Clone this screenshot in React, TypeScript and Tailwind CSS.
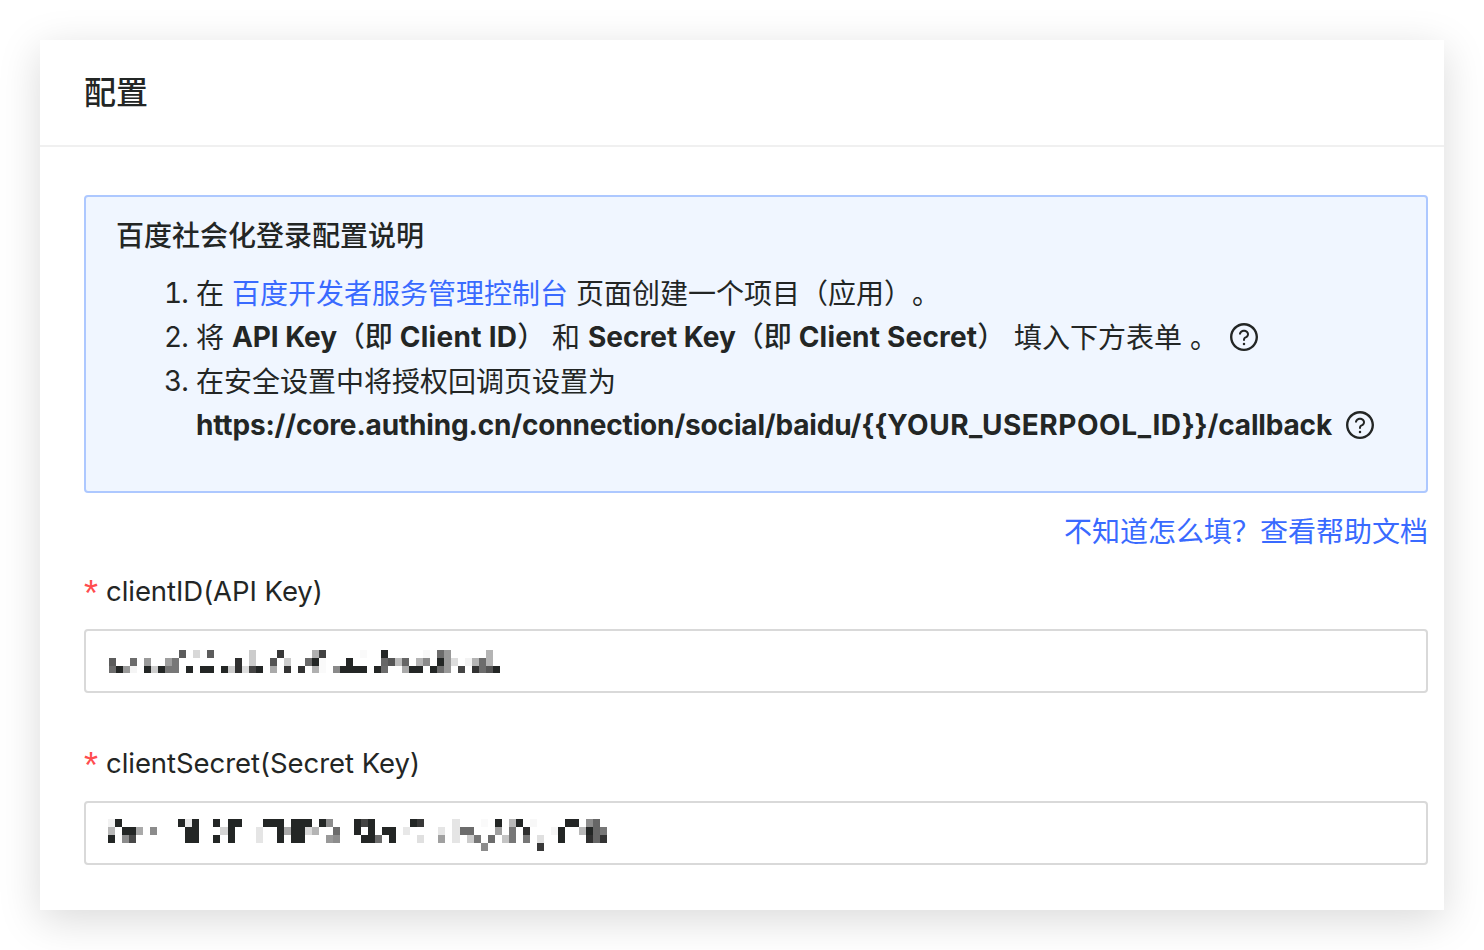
import React from "react";

type MosaicProps = { rows: string[]; cols: number; pitch: number; rowHeight: number };

/* Each row lists "column:shade" or "from-to:shade" runs; a shade is a two-digit grey. */
function Mosaic({ rows, cols, pitch, rowHeight }: MosaicProps) {
  const cells: React.ReactElement[] = [];
  rows.forEach((row, r) => {
    row.split(" ").forEach((run) => {
      if (!run) return;
      const [range, shade] = run.split(":");
      const [from, to = from] = range.split("-");
      const x = Number(from) * pitch;
      const end = (Number(to) + 1) * pitch;
      const fill = shade === "22" ? "#232625" : `#${shade}${shade}${shade}`;
      cells.push(
        <rect key={`${r}-${from}`} x={x} y={r * rowHeight} width={end - x} height={rowHeight} fill={fill} />,
      );
    });
  });
  return (
    <svg width={cols * pitch} height={rows.length * rowHeight} shapeRendering="crispEdges" className="block">
      {cells}
    </svg>
  );
}

const ID_ROWS = [
  "10:5c 12:d8 14:5c 20:cc 24:38 29:b0 30:42 36:fa 39:22 45:f8 47:6c 48:99 54:b4",
  "0:5c 3:6c 5:9a 8:9e 9:77 18:2f 20:cc 23:55 25:cc 28:6a 29:22 30:fa 34:22 39:66 40:55 41:bb 42:66 44:b4 45:8a 47:22 48:99 49:dd 51:f3 52:b4 53:6c 54:b4",
  "0:6c 1:22 2:99 3:f5 5:22 6:cc 7:22 8:77 9:77 11:22 13-14:22 16:22 17:cc 18:2f 19:dd 20:44 21:22 23:aa 25:33 27:33 29:b0 30:fa 32:8a 33-36:22 38:22 39:6c 42:aa 43-44:22 46:22 47:6c 48:99 50:44 52:33 53:6c 54:55 55:22",
];

const SECRET_ROWS = [
  "0:f2 1:22 10:22 11:e8 12:22 15:22 17-18:22 22-24:22 26-28:22 30:22 31:8c 35:22 36:44 37:22 43:22 44:38 49:e5 53:fa 55:22 57:b8 58:22 60:f8 65-66:22 68:8c 69:66",
  "0:b8 2-3:22 4:aa 6:8c 11-12:22 16:d4 17:22 21:e5 24:22 25:aa 26-27:22 28:d8 29:b4 32:6c 35:22 37:22 39-40:22 42:e8 47:e5 49:e5 50-51:6c 55:a0 57:77 59:2f 63:f5 64:22 67:b8 68:22 69:66 70:77",
  "0:22 2:8c 3:48 11-12:22 15:22 17:22 21:e5 24:22 26-27:22 31:99 32:8c 36-37:22 38:6c 40:22 44:e0 47:a0 49:e5 51:cc 52:77 54:6c 56:c4 57:77 59:77 61:e0 64:22 68:2f 69:66 70:33",
  "53:8c 61:38",
];

function HelpIcon() {
  return (
    <svg viewBox="64 64 896 896" className="h-7 w-7 shrink-0" fill="#232625">
      <path d="M512 64C264.6 64 64 264.6 64 512s200.6 448 448 448 448-200.6 448-448S759.4 64 512 64zm0 820c-205.4 0-372-166.6-372-372s166.6-372 372-372 372 166.6 372 372-166.6 372-372 372z" />
      <path d="M623.6 316.7C593.6 290.4 554 276 512 276s-81.6 14.5-111.6 40.7C369.2 344 352 380.7 352 420v7.6c0 4.4 3.6 8 8 8h48c4.4 0 8-3.6 8-8V420c0-44.1 43.1-80 96-80s96 35.9 96 80c0 31.1-22 59.6-56.1 72.7-21.2 8.1-39.2 22.3-52.1 40.9-13.1 19-19.9 41.8-19.9 64.9V620c0 4.4 3.6 8 8 8h48c4.4 0 8-3.6 8-8v-22.7a48.3 48.3 0 0 1 30.9-44.8c59-22.7 97.1-74.7 97.1-132.5.1-39.3-17.1-76-48.3-103.3zM472 732a40 40 0 1 0 80 0 40 40 0 1 0-80 0z" />
    </svg>
  );
}

function Num({ children }: { children: string }) {
  return <span className="-mt-px w-8 tracking-[-0.8px] tabular-nums">{children}</span>;
}

function Label({ children }: { children: string }) {
  return (
    <div className="flex h-11 items-center">
      <span className="w-[22px] pt-1.5 font-['Liberation_Sans',sans-serif] text-[36px] text-[#ff4d4f]">*</span>
      <span className="text-[27.5px] tracking-[-0.05px]">{children}</span>
    </div>
  );
}

export default function App() {
  return (
    <div className="h-[950px] w-[1484px] overflow-hidden bg-white p-10 font-['Inter','Noto_Sans_CJK_SC',sans-serif] text-[28px] leading-[44px] text-[#232625] [text-spacing-trim:space-all]">
      <main className="h-[870px] bg-white shadow-[0_10px_40px_rgba(0,0,0,0.15)]">
        <header className="flex h-[107px] items-center border-b-2 border-[#f0f0f0] pl-11">
          <h1 className="text-[32px] font-medium">配置</h1>
        </header>
        <div className="pt-12 pr-4 pl-11">
          <section className="h-[298px] rounded border-2 border-[#adc8ff] bg-[#f0f6ff] px-[30px] pt-[17px] whitespace-nowrap">
            <h2 className="font-medium">百度社会化登录配置说明</h2>
            <ol className="mt-[14px] pl-12">
              <li className="flex">
                <Num>1.</Num>
                <span className="w-9">在</span>
                <a className="w-[344px] text-[#396aff]">百度开发者服务管理控制台</a>
                <span>页面创建一个项目（应用）。</span>
              </li>
              <li className="flex">
                <Num>2.</Num>
                <span className="w-9">将</span>
                <strong className="-mt-px w-[320px] font-bold tracking-[-0.1px]">
                  API Key<span className="font-medium">（即</span>
                  <span className="tracking-[0.3px]"> Client ID</span>
                  <span className="font-medium">）</span>
                </strong>
                <span className="w-9">和</span>
                <strong className="-mt-px w-[426px] font-bold">
                  Secret Key<span className="font-medium">（即</span>
                  <span className="tracking-[0.2px]"> Client Secret</span>
                  <span className="font-medium">）</span>
                </strong>
                <span className="w-[216px]">填入下方表单 。</span>
                <span className="pt-[7px]">
                  <HelpIcon />
                </span>
              </li>
              <li className="flex">
                <Num>3.</Num>
                <div>
                  <p>在安全设置中将授权回调页设置为</p>
                  <div className="flex">
                    <strong className="-mt-px w-[1150px] font-bold tracking-[-0.17px]">
                      {"https://core.authing.cn/connection/social/baidu/{{"}
                      <span className="tracking-[0.55px]">YOUR_USERPOOL_ID</span>
                      {"}}/callback"}
                    </strong>
                    <span className="pt-[7px]">
                      <HelpIcon />
                    </span>
                  </div>
                </div>
              </li>
            </ol>
          </section>
          <div className="mt-[17px] text-right text-[#396aff]">不知道怎么填？查看帮助文档</div>
          <div className="mt-[15px]">
            <Label>clientID(API Key)</Label>
            <div className="mt-4 h-16 rounded border-2 border-[#d9d9d9] pt-[19px] pl-[23px]">
              <Mosaic rows={ID_ROWS} cols={56} pitch={6.985} rowHeight={7.75} />
            </div>
          </div>
          <div className="mt-12">
            <Label>clientSecret(Secret Key)</Label>
            <div className="mt-4 h-16 rounded border-2 border-[#d9d9d9] pt-4 pl-[22px]">
              <Mosaic rows={SECRET_ROWS} cols={71} pitch={7.03} rowHeight={7.9} />
            </div>
          </div>
        </div>
      </main>
    </div>
  );
}
